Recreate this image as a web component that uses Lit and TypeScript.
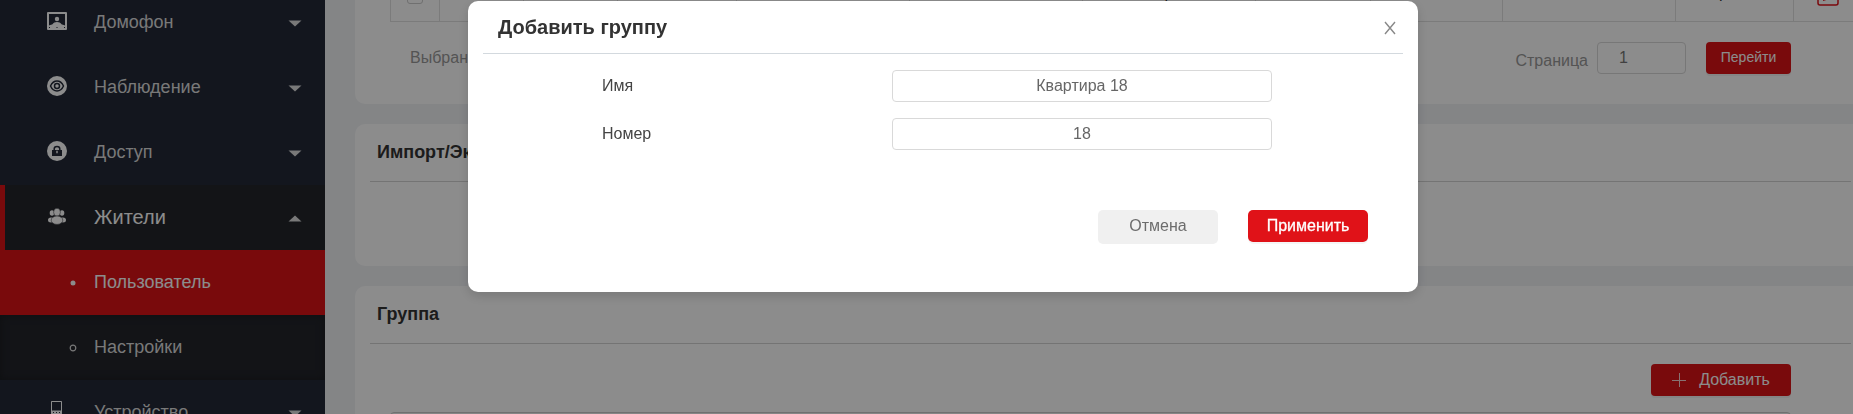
import { LitElement, html, css, svg, nothing } from "lit";
import { customElement, state } from "lit/decorators.js";

const icons = {
  intercom: svg`<path fill-rule="evenodd" d="M1 1h18a1 1 0 0 1 1 1v16a1 1 0 0 1-1 1H1a1 1 0 0 1-1-1V2a1 1 0 0 1 1-1zM2 3v11.500c1.500-.8 3-1 3.500-1.200C6.500 11.700 8 11 10 11s3.500.7 4.500 2.300c.5.200 2 .4 3.500 1.200V3z"/><circle cx="10" cy="8" r="2.200"/><path class="cut" d="M2 16h1v1H2zM9.500 16h1v1h-1zM17 16h1v1h-1z"/>`,
  eye: svg`<circle cx="10" cy="10" r="10"/><path class="line" d="M3.500 10C5.200 6.300 7.500 5 10 5s4.800 1.300 6.500 5c-1.700 3.700-4 5-6.500 5s-4.800-1.300-6.500-5z"/><circle class="line" cx="10" cy="10" r="2.500"/>`,
  lock: svg`<circle cx="10" cy="10" r="10"/><path class="cut" d="M5 9h10v6H5z"/><path class="line" d="M7.200 9.500V8a2.800 2.400 0 0 1 5.600 0v1.500"/><path d="M9.300 9.800h1.400v2.400H9.300z"/>`,
  people: svg`<ellipse cx="5" cy="7" rx="2.300" ry="2.800"/><ellipse cx="15" cy="7" rx="2.300" ry="2.800"/><ellipse cx="4" cy="14" rx="3" ry="2.500"/><ellipse cx="16" cy="14" rx="3" ry="2.500"/><ellipse class="rim" cx="10" cy="6.200" rx="3.400" ry="4"/><ellipse class="rim" cx="10" cy="14.200" rx="5.800" ry="4.200"/>`,
  device: svg`<path fill-rule="evenodd" d="M4.800 0h9.400a.8.800 0 0 1 .8.800v18.400a.8.800 0 0 1-.8.800H4.800a.8.800 0 0 1-.8-.8V.8a.8.800 0 0 1 .8-.8zM5 1v8.500h9V1z"/><path class="cut" d="M6 11h1v1H6zM9 11h1v1H9zM12 11h1v1h-1z"/>`,
};

interface Item {
  label: string;
  icon: keyof typeof icons;
  children?: { label: string; current?: boolean }[];
}

const menu: Item[] = [
  { label: "Домофон", icon: "intercom" },
  { label: "Наблюдение", icon: "eye" },
  { label: "Доступ", icon: "lock" },
  {
    label: "Жители",
    icon: "people",
    children: [{ label: "Пользователь", current: true }, { label: "Настройки" }],
  },
  { label: "Устройство", icon: "device" },
];

@customElement("side-menu")
class SideMenu extends LitElement {
  static styles = css`
    :host { display: block; background: #232938; overflow: hidden; }
    .list { margin: -10px 0 0; padding: 0; list-style: none; }
    .sub { margin: 0; padding: 0; list-style: none; }
    .item {
      display: grid; grid-template-columns: 20px 1fr 14px; column-gap: 27px;
      align-items: center; box-sizing: border-box; width: 100%; height: 65px;
      padding: 0 23px 3px 42px; border: 0; border-left: 5px solid transparent;
      background: none; color: #dcdcdc; text-align: left;
      font: 18px/24px "Liberation Sans", Arial, sans-serif;
    }
    .open { background: #23252b; border-left-color: #dc1317; color: #fff; font-size: 20px; }
    .text { padding-top: 2px; }
    .icon { width: 20px; height: 20px; fill: #fff; }
    .cut { fill: #232938; }
    .line { fill: none; stroke: #232938; stroke-width: 1.5; }
    .rim { stroke: #23252b; stroke-width: .5; }
    .caret { width: 14px; height: 7px; margin-top: 4px; fill: #dcdcdc; }
    .link {
      display: grid; grid-template-columns: 8px 1fr; column-gap: 17px; align-items: center;
      height: 65px; box-sizing: border-box; padding: 0 0 3px 69px;
      color: #dcdcdc; background: #23252b; text-decoration: none; font-size: 18px; line-height: 24px;
      box-shadow: inset 0 0 8px #1a1b20;
    }
    .current { background: #dc1317; color: #fff; box-shadow: none; }
    .dot { width: 8px; height: 8px; margin-top: 4px; fill: none; stroke: #dcdcdc; stroke-width: 1.2; }
    .current .dot { fill: #fff; stroke: none; }
  `;
  render() {
    return html`<nav><ul class="list">
      ${menu.map((m) => html`<li>
        <button class="item ${m.children ? "open" : ""}" aria-expanded=${m.children ? "true" : "false"}>
          <svg class="icon" viewBox="0 0 20 20" aria-hidden="true">${icons[m.icon]}</svg>
          <span class="text">${m.label}</span>
          <svg class="caret" viewBox="0 0 14 7" aria-hidden="true"><path d=${m.children ? "M.5 6.500L7 .5l6.500 6z" : "M.5.5h13L7 6.500z"} /></svg>
        </button>
        ${m.children
          ? html`<ul class="sub">${m.children.map((c) => html`<li>
              <a class="link ${c.current ? "current" : ""}" href="#" aria-current=${c.current ? "page" : nothing}>
                <svg class="dot" viewBox="0 0 8 8" aria-hidden="true"><circle cx="4" cy="4" r=${c.current ? 2.5 : 2.8} /></svg>
                <span class="text">${c.label}</span>
              </a></li>`)}</ul>`
          : nothing}
      </li>`)}
    </ul></nav>`;
  }
}

@customElement("group-dialog")
class GroupDialog extends LitElement {
  @state() name = "Квартира 18";
  @state() number = "18";
  static styles = css`
    :host {
      position: fixed; inset: 0; display: flex; justify-content: center; align-items: flex-start;
      padding: 1px 0 0 33px; background: rgba(0, 0, 0, .45);
    }
    .box {
      box-sizing: border-box; width: 950px; max-width: 100%; padding: 0 15px 50px;
      border-radius: 10px; background: #fff; box-shadow: 0 4px 12px rgba(0, 0, 0, .15);
    }
    .head {
      display: flex; justify-content: space-between; align-items: center; height: 52px;
      padding: 0 6px 0 15px; border-bottom: 1px solid #d3d9de;
    }
    .title { margin: 0; font-size: 20px; line-height: 24px; color: #333; }
    .close { display: flex; padding: 2px 0 0; border: 0; background: none; }
    .x { width: 14px; height: 14px; stroke: #888; stroke-width: 1.4; fill: none; }
    .form { display: grid; gap: 16px; padding: 16px 131px 0 119px; }
    .row { display: grid; grid-template-columns: 1fr 380px; align-items: center; font-size: 16px; color: #444; }
    .field {
      box-sizing: border-box; height: 32px; border: 1px solid #d9d9d9; border-radius: 4px;
      font: 16px/24px "Liberation Sans", Arial, sans-serif; color: #666; text-align: center; background: #fff;
    }
    .actions { display: flex; justify-content: flex-end; gap: 30px; padding: 60px 35px 0 0; }
    .btn {
      width: 120px; height: 32px; padding: 0; border: 0; border-radius: 5px;
      font: 16px/24px "Liberation Sans", Arial, sans-serif;
      color: #6c6c6c; background: #f0f0f0; box-shadow: 0 2px 0 #f0f0f0;
    }
    .primary { color: #fff; background: #e01218; box-shadow: 0 2px 0 rgba(0, 0, 0, .04); -webkit-text-stroke: .3px #fff; }
  `;
  render() {
    return html`<form class="box" role="dialog" aria-labelledby="title">
      <header class="head">
        <h2 class="title" id="title">Добавить группу</h2>
        <button class="close" type="button" aria-label="Закрыть">
          <svg class="x" viewBox="0 0 14 14"><path d="M2 1l10 12M12 1L2 13" /></svg>
        </button>
      </header>
      <div class="form">
        <div class="row"><label for="name">Имя</label><input class="field" id="name" .value=${this.name} /></div>
        <div class="row"><label for="number">Номер</label><input class="field" id="number" .value=${this.number} /></div>
      </div>
      <div class="actions">
        <button class="btn" type="button">Отмена</button>
        <button class="btn primary" type="button">Применить</button>
      </div>
    </form>`;
  }
}

@customElement("app-root")
class AppRoot extends LitElement {
  static styles = css`
    :host {
      display: grid; grid-template-columns: 325px 1fr; height: 100vh; overflow: hidden;
      font: 16px/24px "Liberation Sans", Arial, sans-serif; background: #f0f2f5; color: #333;
    }
    .main { display: grid; align-content: start; gap: 20px; padding-left: 30px; margin-right: -13px; min-width: 0; }
    .card { background: #fff; border-radius: 10px; padding: 0 15px; min-width: 0; }
    .users { border-radius: 0 0 10px 10px; padding: 0 0 30px 35px; }
    .io { height: 142px; }
    .heading {
      box-sizing: border-box; margin: 0; height: 58px; padding: 0 7px 2px; display: flex; align-items: center;
      font-size: 18px; line-height: 24px; border-bottom: 1px solid #d3d3d3; color: #333;
    }
    .scroll { height: 22px; overflow: hidden; display: flex; align-items: flex-end; }
    .table { border-collapse: collapse; width: 1521px; flex: none; table-layout: fixed; }
    .cell {
      box-sizing: border-box; height: 58px; padding: 0; border: 1px solid #e0e0e0;
      text-align: center; line-height: 24px;
    }
    .c0 { width: 49px; } .c1 { width: 84px; } .c2 { width: 94px; } .c3 { width: 119px; }
    .c4 { width: 173px; } .c5 { width: 115px; } .c6 { width: 132px; } .c7 { width: 118px; }
    .check {
      appearance: none; display: block; margin: 6px auto 0; width: 16px; height: 16px;
      border: 1px solid #ccc; border-radius: 3px;
    }
    .after { padding-left: 48px; }
    .before { padding-right: 22px; }
    .edit { display: block; margin: 4px 0 0 23px; padding: 0; border: 0; background: none; height: 22px; }
    .pen { display: block; width: 22px; height: 22px; fill: none; stroke: #e01218; stroke-width: 1.5; }
    .nib { fill: #e01218; stroke: none; }
    .pager { display: flex; align-items: center; padding: 20px 75px 0 20px; color: #999; }
    .count { flex: 1; }
    .label { padding: 5px 9px 0 0; }
    .page {
      box-sizing: border-box; width: 89px; height: 32px; padding: 0 0 0 21px; margin-right: 20px;
      border: 1px solid #d9d9d9; border-radius: 4px; background: #fff; color: #777;
      font: 16px/24px "Liberation Sans", Arial, sans-serif;
    }
    .btn {
      display: flex; align-items: center; justify-content: center; height: 32px; padding: 0;
      border: 0; border-radius: 4px; background: #dc1317; color: #fff;
      box-shadow: 0 2px 0 rgba(0, 0, 0, .05); font: 16px/24px "Liberation Sans", Arial, sans-serif;
    }
    .go { width: 85px; padding-bottom: 2px; font-size: 14px; }
    .add { width: 140px; gap: 13px; margin-left: auto; padding-bottom: 1px; }
    .plus { width: 14px; height: 14px; stroke: #fff; stroke-width: 1; opacity: .8; }
    .body { padding: 20px 60px 0 20px; }
    .groups { margin-top: 16px; height: 60px; border: 1px solid #ccc; border-radius: 4px 4px 0 0; background: #f5f5f5; }
  `;
  render() {
    const widths = ["c0", "c1", "c2", "c3", "c4", "c4", "c4", "c5", "c6", "c4", "c7", "c7"];
    const content = (i: number) => {
      if (i === 0) return html`<input class="check" type="checkbox" aria-label="Выбрать" />`;
      if (i === 6) return html`<span>р</span>`;
      if (i === 9) return html`<span class="after">,</span>`;
      if (i === 10) return html`<span class="before">р</span>`;
      if (i === 11)
        return html`<button class="edit" aria-label="Изменить"><svg class="pen" viewBox="0 0 22 22">
          <rect x="1" y="1" width="20" height="20" rx="2" /><path d="M7 15v-4l7-7 4 4-7 7z" /><path class="nib" d="M6 17v-4h5v2.500z" /></svg></button>`;
      return nothing;
    };
    return html`
      <side-menu></side-menu>
      <main class="main">
        <section class="card users">
          <div class="scroll"><table class="table"><tbody><tr>
            ${widths.map((w, i) => html`<td class="cell ${w}">${content(i)}</td>`)}
          </tr></tbody></table></div>
          <div class="pager">
            <span class="count">Выбрано</span>
            <label class="label" for="page">Страница</label>
            <input class="page" id="page" value="1" />
            <button class="btn go">Перейти</button>
          </div>
        </section>
        <section class="card io"><h2 class="heading">Импорт/Экспорт</h2></section>
        <section class="card">
          <h2 class="heading">Группа</h2>
          <div class="body">
            <button class="btn add"><svg class="plus" viewBox="0 0 14 14" aria-hidden="true"><path d="M7.500 0v14M0 7.500h14" /></svg>Добавить</button>
            <div class="groups"></div>
          </div>
        </section>
      </main>
      <group-dialog></group-dialog>
    `;
  }
}
